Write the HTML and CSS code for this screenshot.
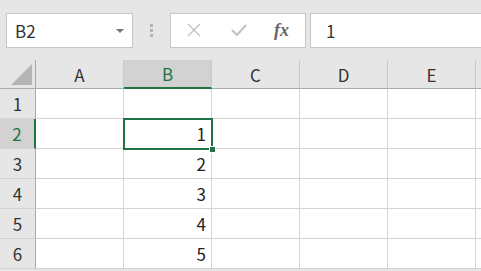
FILE: index.html
```html
<!DOCTYPE html>
<html lang="ja">
  <head>
    <meta charset="UTF-8" />
    <meta name="viewport" content="width=device-width, initial-scale=1.0" />
    <title>Book1</title>
    <link rel="stylesheet" href="styles.css">
  </head>
  <body>
    <!-- 数式バー -->
    <div class="formula-row">
      <div class="name-box">
        <span>B2</span>
        <span class="arrow"></span>
      </div>
      <div class="grip"><i></i><i></i><i></i></div>
      <div class="fx-box">
        <svg class="icon" width="14" height="14" viewBox="0 0 14 14">
          <path d="M1 1 L13 13 M13 1 L1 13" stroke="#c2c2c2" stroke-width="1.4" fill="none" />
        </svg>
        <svg class="icon" width="16" height="14" viewBox="0 0 16 14">
          <path d="M1 7 L6 12 L15 2" stroke="#c2c2c2" stroke-width="2.2" fill="none" />
        </svg>
        <span class="fx">fx</span>
      </div>
      <div class="formula-input">1</div>
    </div>

    <!-- シート -->
    <div class="sheet">
      <div class="corner"><span class="tri"></span></div>
      <div class="col-head">A</div>
      <div class="col-head active">B</div>
      <div class="col-head">C</div>
      <div class="col-head">D</div>
      <div class="col-head">E</div>
      <div class="col-head last"></div>

      <div class="row-head">1</div>
      <div class="cell"></div><div class="cell"></div><div class="cell"></div><div class="cell"></div><div class="cell"></div><div class="cell last"></div>

      <div class="row-head active">2</div>
      <div class="cell"></div><div class="cell">1</div><div class="cell"></div><div class="cell"></div><div class="cell"></div><div class="cell last"></div>

      <div class="row-head">3</div>
      <div class="cell"></div><div class="cell">2</div><div class="cell"></div><div class="cell"></div><div class="cell"></div><div class="cell last"></div>

      <div class="row-head">4</div>
      <div class="cell"></div><div class="cell">3</div><div class="cell"></div><div class="cell"></div><div class="cell"></div><div class="cell last"></div>

      <div class="row-head">5</div>
      <div class="cell"></div><div class="cell">4</div><div class="cell"></div><div class="cell"></div><div class="cell"></div><div class="cell last"></div>

      <div class="row-head">6</div>
      <div class="cell"></div><div class="cell">5</div><div class="cell"></div><div class="cell"></div><div class="cell"></div><div class="cell last"></div>

      <!-- 選択セル -->
      <div class="selection"><span class="handle"></span></div>
    </div>
  </body>
</html>
```

FILE: styles.css
```css
/* 全体 */
body {
  margin: 0;
  background-color: #e6e6e6;
  font-family: "Noto Sans CJK JP", "DejaVu Sans", sans-serif;
  color: #222;
  overflow: hidden;
}

/* 数式バー */
.formula-row {
  display: flex;
  align-items: center;
  height: 60px;
  padding-left: 6px;
  box-sizing: border-box;
}

.name-box {
  width: 127px;
  height: 35px;
  box-sizing: border-box;
  border: 1px solid #c6c6c6;
  background-color: #fff;
  display: flex;
  align-items: center;
  justify-content: space-between;
  padding: 0 8px 0 8px;
  font-size: 17px;
  color: #333;
}

.arrow {
  width: 0;
  height: 0;
  border-left: 4px solid transparent;
  border-right: 4px solid transparent;
  border-top: 4px solid #777;
  margin-top: 1px;
}

.grip {
  width: 37px;
  display: flex;
  flex-direction: column;
  align-items: center;
  gap: 2px;
}

.grip i {
  width: 3px;
  height: 3px;
  background-color: #b4b4b4;
}

.fx-box {
  width: 136px;
  height: 35px;
  box-sizing: border-box;
  border: 1px solid #c6c6c6;
  background-color: #fff;
  display: flex;
  align-items: center;
  padding-left: 16px;
  gap: 30px;
}

.fx {
  font-family: "Liberation Serif", serif;
  font-style: italic;
  font-weight: bold;
  font-size: 18px;
  color: #666;
  margin-left: -3px;
}

.formula-input {
  flex: 1;
  height: 35px;
  margin-left: 4px;
  box-sizing: border-box;
  border: 1px solid #c6c6c6;
  border-right: none;
  background-color: #fff;
  display: flex;
  align-items: center;
  padding-left: 15px;
  font-size: 17px;
  color: #333;
}

/* シート */
.sheet {
  position: relative;
  display: grid;
  grid-template-columns: 36px repeat(5, 88px) 20px;
  grid-template-rows: 29px repeat(6, 30px);
  background-color: #fff;
}

.corner,
.col-head,
.row-head {
  background-color: #e6e6e6;
  display: flex;
  align-items: center;
  justify-content: center;
  box-sizing: border-box;
  font-size: 17px;
  color: #333;
}

.corner {
  border-right: 1px solid #ababab;
  border-bottom: 1px solid #ababab;
  position: relative;
}

.tri {
  position: absolute;
  right: 3px;
  bottom: 3px;
  width: 0;
  height: 0;
  border-left: 21px solid transparent;
  border-bottom: 21px solid #b4b4b4;
}

.col-head {
  border-right: 1px solid #c8c8c8;
  border-bottom: 1px solid #ababab;
}

.col-head.active {
  background-color: #d2d2d2;
  color: #217346;
  border-bottom: 2px solid #217346;
}

.row-head {
  border-right: 1px solid #ababab;
  border-bottom: 1px solid #d4d4d4;
}

.row-head.active {
  background-color: #d2d2d2;
  color: #217346;
  border-right: 2px solid #217346;
}

.cell {
  border-right: 1px solid #d4d4d4;
  border-bottom: 1px solid #d4d4d4;
  box-sizing: border-box;
  display: flex;
  align-items: center;
  justify-content: flex-end;
  padding-right: 5px;
  font-size: 17px;
  color: #222;
}

.last {
  border-right: none;
}

/* 選択枠 */
.selection {
  position: absolute;
  left: 123px;
  top: 58px;
  width: 90px;
  height: 32px;
  box-sizing: border-box;
  border: 2px solid #217346;
}

.handle {
  position: absolute;
  right: -5px;
  bottom: -5px;
  width: 5px;
  height: 5px;
  background-color: #217346;
  border: 1px solid #fff;
}
```
